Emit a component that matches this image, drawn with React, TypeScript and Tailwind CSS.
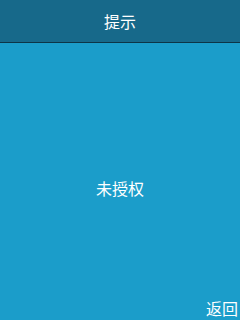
export default function App() {
  return (
    <div
      className="w-[240px] h-[320px] flex flex-col bg-[#1b9dca] text-white"
      style={{ fontFamily: '"Noto Sans CJK SC", "Liberation Sans", sans-serif' }}
    >
      <div className="h-[43px] flex items-center justify-center bg-[#17698a] border-b border-[#0d3547]">
        <span className="text-[16px] leading-none">提示</span>
      </div>
      <div className="flex-1 flex items-center justify-center pt-[37px]">
        <span className="text-[16px] leading-none">未授权</span>
      </div>
      <div className="h-[24px] flex items-center justify-end pr-[2px]">
        <span className="text-[16px] leading-none">返回</span>
      </div>
    </div>
  );
}
